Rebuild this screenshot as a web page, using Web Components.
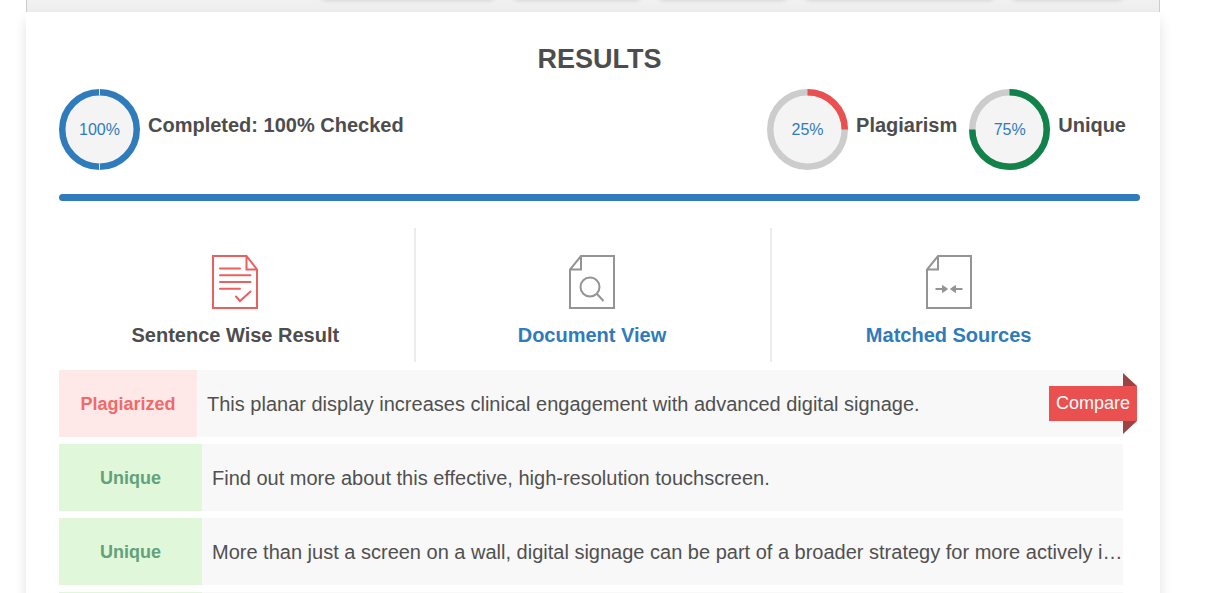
<!DOCTYPE html>
<html lang="en">
<head>
<meta charset="utf-8">
<title>Plagiarism results</title>
<style>
html{overflow:hidden}
body{margin:0;background:#fff;color:#4d4d4d;font-family:"Liberation Sans",Arial,sans-serif;height:100vh;overflow:hidden}
</style>
</head>
<body>
<results-page></results-page>
<script>
function define(name, html, setup) {
  const template = document.createElement('template');
  template.innerHTML = html;
  customElements.define(name, class extends HTMLElement {
    connectedCallback() {
      if (this.shadowRoot) return;
      const root = this.attachShadow({ mode: 'open' });
      root.append(template.content.cloneNode(true));
      if (setup) setup(this, root);
    }
  });
}

define('tool-strip', `
<style>
:host{display:flex;gap:16px;justify-content:flex-end;height:12px;padding-right:35px;overflow:hidden;box-sizing:border-box;background:linear-gradient(#f1f1f1,#ededed);border:solid #ccc;border-width:0 1px}
i{flex:none;height:20px;margin-top:-24px;border-radius:6px;box-shadow:0 4px 5px rgba(0,0,0,.16)}
i:nth-of-type(1){width:176px}i:nth-of-type(2){width:130px}i:nth-of-type(3){width:130px}i:nth-of-type(4){width:191px}i:nth-of-type(5){width:113px}
</style><i></i><i></i><i></i><i></i><i></i>`);

define('percent-ring', `
<style>
:host{display:flex;align-items:flex-start;gap:8px;font-weight:bold;font-size:20px;line-height:24px}
svg{width:81px;height:81px;flex:none}
.ring{display:grid}
.ring>*{grid-area:1/1}
.num{place-self:center;font-weight:normal;font-size:16px;color:#307bbb}
.label{margin-top:24px}
</style>
<div class="ring">
<svg viewBox="0 0 81 81" aria-hidden="true" fill="none">
<circle class="track" cx="40.5" cy="40.5" r="37.25" fill="#f4f4f4" stroke="#ccc" stroke-width="6.5"/>
<path class="arc" stroke-width="6.5"/>
<path class="seam" stroke="#dce8f3" d="M40.5 0v6.5M40.5 74.5V81"/>
</svg><span class="num"></span></div><span class="label"><slot></slot></span>`, (host, root) => {
  const value = Number(host.getAttribute('value'));
  const color = host.getAttribute('color');
  root.querySelector('.num').textContent = value + '%';
  if (value === 100) {
    root.querySelector('.track').setAttribute('stroke', color);
    return;
  }
  root.querySelector('.seam').remove();
  const angle = value / 50 * Math.PI;
  const x = 40.5 + 37.25 * Math.sin(angle);
  const y = 40.5 - 37.25 * Math.cos(angle);
  const arc = root.querySelector('.arc');
  arc.setAttribute('stroke', color);
  arc.setAttribute('d', `M40.5 3.25A37.25 37.25 0 ${value > 50 ? 1 : 0} 1 ${x} ${y}`);
});

define('result-tab', `
<style>
:host{display:block;padding:27px 2px 15px 0;border-right:2px solid #ececec}
:host([last]){border-right:0;padding-right:4px}
a{display:flex;flex-direction:column;align-items:center;gap:14px;color:#307bbb;text-decoration:none;font-size:20px;line-height:24px;font-weight:bold}
:host([current]) a{color:#4d4d4d}
</style><a href="#"><slot name="icon"></slot><span><slot></slot></span></a>`);

define('sentence-row', `
<style>
:host{display:flex;min-height:67px;background:#f8f8f8;position:relative;font-size:20px;line-height:24px;align-items:stretch;color:#505050}
.tag{flex:none;display:flex;align-items:center;justify-content:center;width:143px;font-size:18px;font-weight:bold;background:#e1f7da;color:#61a27b}
:host([plagiarized]) .tag{width:138px;background:#ffe8e8;color:#f06a6a}
.text{align-self:center;padding-left:10px;white-space:nowrap;flex:1;min-width:0}
button{position:absolute;right:-14px;top:16px;border:0;margin:0;padding:0 7px;height:35px;background:#eb5050;color:#fff;font:18px/35px "Liberation Sans",Arial,sans-serif;cursor:pointer}
button::before,button::after{content:"";position:absolute;right:0;width:14px;height:13px;background:#994546}
button::before{bottom:100%;clip-path:polygon(0 0,100% 100%,0 100%)}
button::after{top:100%;clip-path:polygon(0 0,100% 0,0 100%)}
</style><span class="tag"></span><span class="text"><slot></slot></span>`, (host, root) => {
  if (!host.textContent) return;
  const bad = host.hasAttribute('plagiarized');
  root.querySelector('.tag').textContent = bad ? 'Plagiarized' : 'Unique';
  if (bad) {
    const button = document.createElement('button');
    button.type = 'button';
    button.textContent = 'Compare';
    root.append(button);
  }
});

define('results-page', `
<style>
:host{display:block;margin:0 46px 0 26px}
main{background:#fff;box-shadow:0 8px 12px rgba(0,0,0,.12);padding:30px 20px 0 33px}
h1{margin:0;text-align:center;font-size:27px;line-height:35px}
.stats{display:flex;margin-top:12px;gap:12px;padding-right:14px}
.stats :first-child{margin-right:auto}
.bar{height:7px;border-radius:4px;background:#307bbb;margin-top:24px}
nav{display:grid;grid-template-columns:repeat(3,1fr);margin:27px 11px 0 0}
.rows{display:grid;gap:7px;margin:8px 17px 0 0}
svg{width:46px;height:54px;display:block;fill:none;stroke:#949494;stroke-width:2}
.red{stroke:#eb5f5f}
</style>
<tool-strip></tool-strip>
<main>
<h1>RESULTS</h1>
<div class="stats">
<percent-ring value="100" color="#307bbb">Completed: 100% Checked</percent-ring>
<percent-ring value="25" color="#eb5050">Plagiarism</percent-ring>
<percent-ring value="75" color="#10824a">Unique</percent-ring>
</div>
<div class="bar"></div>
<nav>
<result-tab current><svg class="red" slot="icon" viewBox="0 0 46 54" aria-hidden="true"><path d="M1 1h33.500l10.500 13.500V53H1zM34.500 1v13.500H45"/><path stroke-linecap="round" d="M8 13.500h20M8 20.300h30.500M8 27h30.500M8 33.800h20M24 41.500l4 4.500 10.500-9.500"/></svg>Sentence Wise Result</result-tab>
<result-tab><svg slot="icon" viewBox="0 0 46 54" aria-hidden="true"><path d="M45 1H12L1 14.500V53h44zM12 1v13.500H1"/><circle cx="21" cy="32" r="9.500"/><path d="M28 39l6.500 7"/></svg>Document View</result-tab>
<result-tab last><svg slot="icon" viewBox="0 0 46 54" aria-hidden="true"><path d="M45 1H12L1 14.500V53h44zM12 1v13.500H1"/><path d="M9.500 34H18M28 34h8.500"/><path fill="#949494" stroke-width="1" d="M16.500 30.500v7l5-3.500zM29.500 30.500v7l-5-3.500z"/></svg>Matched Sources</result-tab>
</nav>
<div class="rows">
<sentence-row plagiarized>This planar display increases clinical engagement with advanced digital signage.</sentence-row>
<sentence-row>Find out more about this effective, high-resolution touchscreen.</sentence-row>
<sentence-row>More than just a screen on a wall, digital signage can be part of a broader strategy for more actively i…</sentence-row>
<sentence-row></sentence-row>
</div>
</main>`);
</script>
</body>
</html>
